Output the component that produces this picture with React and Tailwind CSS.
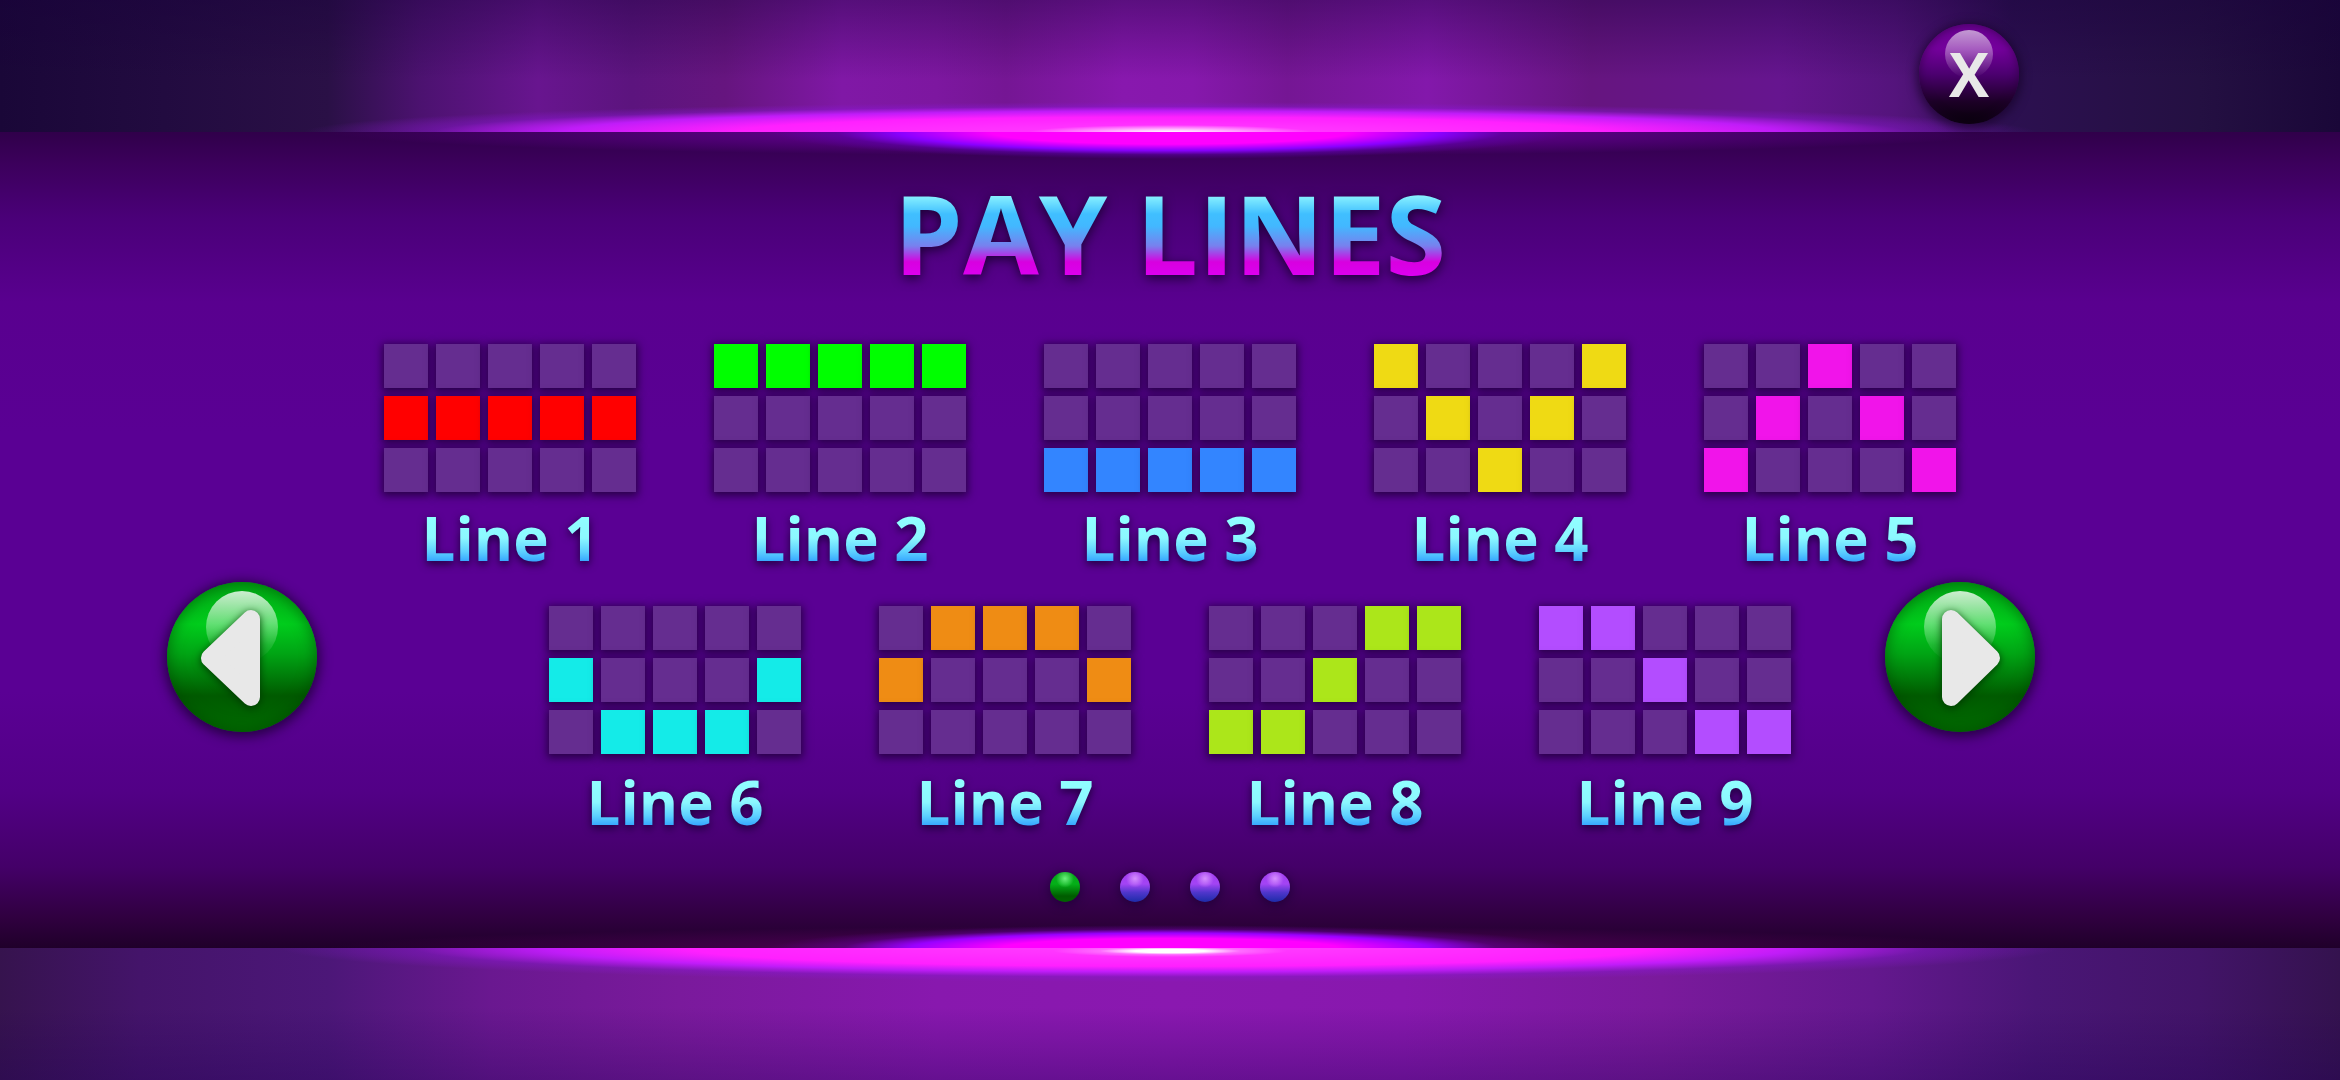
import { useState } from 'react';
import clsx from 'clsx';

// rows: the highlighted row of each reel, from left to right
const TOP_LINES = [
  { id: 1, rows: [1, 1, 1, 1, 1], color: 'bg-[#ff0000]' },
  { id: 2, rows: [0, 0, 0, 0, 0], color: 'bg-[#00ff00]' },
  { id: 3, rows: [2, 2, 2, 2, 2], color: 'bg-[#3385ff]' },
  { id: 4, rows: [0, 1, 2, 1, 0], color: 'bg-[#efda14]' },
  { id: 5, rows: [2, 1, 0, 1, 2], color: 'bg-[#f114ea]' },
];

const BOTTOM_LINES = [
  { id: 6, rows: [1, 2, 2, 2, 1], color: 'bg-[#14ebe8]' },
  { id: 7, rows: [1, 0, 0, 0, 1], color: 'bg-[#ef8c14]' },
  { id: 8, rows: [2, 2, 1, 0, 0], color: 'bg-[#ace61a]' },
  { id: 9, rows: [0, 0, 1, 2, 2], color: 'bg-[#b34dff]' },
];

const PAGES = [0, 1, 2, 3];

export default function App() {
  const [page, setPage] = useState(0);
  const move = step => setPage((page + step + PAGES.length) % PAGES.length);

  return (
    <div className="min-h-screen flex flex-col bg-[#1d0a3c] font-['Open_Sans','Noto_Sans',sans-serif]">

      {/* Top strip */}
      <header className="h-[132px] flex justify-end items-start pt-6 pr-[321px]
                         bg-[radial-gradient(6%_7px_at_50%_100%,#fff_0%,#ffc0ff_35%,transparent_100%),radial-gradient(37%_30px_at_50%_100%,#ff40ff_0%,#ff20ff_50%,#c01cf8_70%,#8a18d070_85%,transparent_100%),linear-gradient(180deg,#18003a66_0%,transparent_60%),linear-gradient(90deg,#1a0738_0%,#220b40_7%,#2a1046_14%,#4c1270_18%,#68158f_23%,#5c147e_27%,#66157f_31%,#8018a6_36%,#7d17a0_40%,#751694_43%,#8818ae_48%,#8618ac_51%,#751694_55%,#8318ab_61%,#661580_68%,#66158f_76%,#54147c_81%,#2c1050_86%,#241042_94%,#1a0738_100%)]">
        <CloseButton />
      </header>

      <main className="pt-[42px] pb-[46px] flex flex-col
                       bg-[radial-gradient(17%_27px_at_50%_0%,#ff00ff_0%,#ff00ff_45%,#8a00ff_68%,#6000b080_84%,transparent_100%),radial-gradient(36%_24px_at_50%_0%,#8a00c8_0%,#7a00b080_50%,transparent_100%),radial-gradient(17%_23px_at_50%_100%,#ff00ff_0%,#ff00ff_42%,#9a00ff_65%,#60009080_82%,transparent_100%),radial-gradient(36%_22px_at_50%_100%,#7a0090_0%,#5a006080_50%,transparent_100%),linear-gradient(180deg,#30004a_0px,#3c005c_32px,#4a0078_85px,#59008f_170px,#5a0094_300px,#5a0094_560px,#520086_660px,#440068_735px,#300040_785px,#20002a_816px)]">
        <h1 className="text-center text-[110px] leading-[116px] font-bold text-transparent bg-clip-text
                       bg-[linear-gradient(180deg,#90f6ff_20px,#40bfff_40px,#42b8ff_52px,#7880ee_72px,#d800e0_88px,#dc00f0_102px)]
                       drop-shadow-[0_3px_6px_#1a0033]">
          PAY LINES
        </h1>

        <div className="mt-[54px] flex justify-center gap-[78px]">
          {TOP_LINES.map(line => (
            <PayLine key={line.id} line={line} gap="gap-4" />
          ))}
        </div>

        <div className="mt-3.5 grid grid-cols-[1fr_auto_1fr] items-start">
          <div className="justify-self-end pr-[232px]">
            <ArrowButton label="Previous page" onClick={() => move(-1)} />
          </div>
          <div className="pt-6 flex gap-[78px]">
            {BOTTOM_LINES.map(line => (
              <PayLine key={line.id} line={line} gap="gap-[18px]" />
            ))}
          </div>
          <div className="justify-self-start pl-[94px]">
            <ArrowButton label="Next page" flip onClick={() => move(1)} />
          </div>
        </div>

        {/* Page dots */}
        <nav className="mt-10 flex justify-center gap-10">
          {PAGES.map(p => (
            <button
              key={p}
              aria-label={`Page ${p + 1}`}
              onClick={() => setPage(p)}
              className={clsx(
                'size-[30px] rounded-full shadow-[0_2px_8px_2px_#1a003399]',
                p === page
                  ? 'bg-[radial-gradient(9px_9px_at_50%_22%,#6cf07c_0%,transparent_100%),linear-gradient(180deg,#08a01c_0%,#04b018_40%,#005c00_80%,#006400_100%)]'
                  : 'bg-[radial-gradient(9px_9px_at_50%_22%,#d690ff_0%,transparent_100%),linear-gradient(180deg,#a23cf0_0%,#a344f4_40%,#5036cc_68%,#1c2ca8_100%)]'
              )}
            />
          ))}
        </nav>
      </main>

      {/* Bottom strip */}
      <footer className="min-h-[132px] flex-1
                         bg-[radial-gradient(5%_6px_at_50%_3px,#fff_0%,#fff_30%,#ffa0ff80_60%,transparent_100%),radial-gradient(38%_34px_at_50%_0%,#ff40ff_0%,#ff20ff_54%,#c01cf8_70%,#8a18d070_85%,transparent_100%),linear-gradient(180deg,transparent_45%,#20005555_100%),linear-gradient(90deg,#36134e_0%,#44146a_6%,#4c1778_14%,#6a1890_21%,#7a1a9c_29%,#8818ae_40%,#8a18b0_50%,#8818ae_60%,#7a1a9c_71%,#64188e_80%,#4a1676_87%,#421468_94%,#34124e_100%)]" />
    </div>
  );
}

function PayLine({ line, gap }) {
  return (
    <figure className={clsx('flex flex-col items-center', gap)}>
      <div className="grid grid-cols-5 gap-2">
        {[0, 1, 2].map(row =>
          line.rows.map((hit, reel) => (
            <div
              key={`${row}-${reel}`}
              className={clsx(
                'size-11 shadow-[0_2px_8px_2px_#1e0038cc]',
                hit === row ? line.color : 'bg-[#652d90]'
              )}
            />
          ))
        )}
      </div>
      <figcaption className="text-[60px] leading-[60px] font-bold text-transparent bg-clip-text whitespace-nowrap
                             bg-[linear-gradient(180deg,#90ffff_10px,#8cf8ff_30px,#5cd0ff_44px,#38a8ff_53px)]
                             drop-shadow-[0_3px_4px_#1a0038]">
        Line {line.id}
      </figcaption>
    </figure>
  );
}

function ArrowButton({ label, flip, onClick }) {
  return (
    <button
      aria-label={label}
      onClick={onClick}
      className="block size-[150px] rounded-full bg-[linear-gradient(180deg,#00a814_0%,#00cc1c_28%,#00a414_48%,#005a00_76%,#006c00_100%)]
                 shadow-[inset_0_0_14px_2px_#00400080,0_2px_12px_3px_#1a0033cc]"
    >
      <svg viewBox="0 0 150 150" className="size-full" aria-hidden="true">
        <defs>
          <linearGradient id="arrow-gloss" x1="0" y1="0" x2="0" y2="1">
            <stop offset="0" stopColor="#fff" stopOpacity="0.8" />
            <stop offset="0.75" stopColor="#fff" stopOpacity="0.12" />
            <stop offset="1" stopColor="#fff" stopOpacity="0" />
          </linearGradient>
        </defs>
        <circle cx="75" cy="45" r="36" fill="url(#arrow-gloss)" />
        <path
          d={flip ? 'M66 37 L106 76 L66 115 Z' : 'M84 37 L43 76 L84 115 Z'}
          fill="#e8e8e8"
          stroke="#e8e8e8"
          strokeWidth="18"
          strokeLinejoin="round"
          className="drop-shadow-[0_2px_4px_#003800]"
        />
      </svg>
    </button>
  );
}

function CloseButton() {
  return (
    <button
      aria-label="Close"
      className="relative size-[100px] rounded-full text-[60px] leading-[100px] font-bold text-[#e8e8e8]
                 bg-[linear-gradient(180deg,#6c0094_0%,#74009c_25%,#4c0070_50%,#1c0026_78%,#060008_100%)]
                 shadow-[inset_0_0_8px_1px_#20003080,0_2px_10px_3px_#12002299]"
    >
      <span className="absolute left-[26px] top-1.5 size-12 rounded-full bg-linear-to-b from-white/60 to-white/0" />
      <span className="relative">X</span>
    </button>
  );
}
